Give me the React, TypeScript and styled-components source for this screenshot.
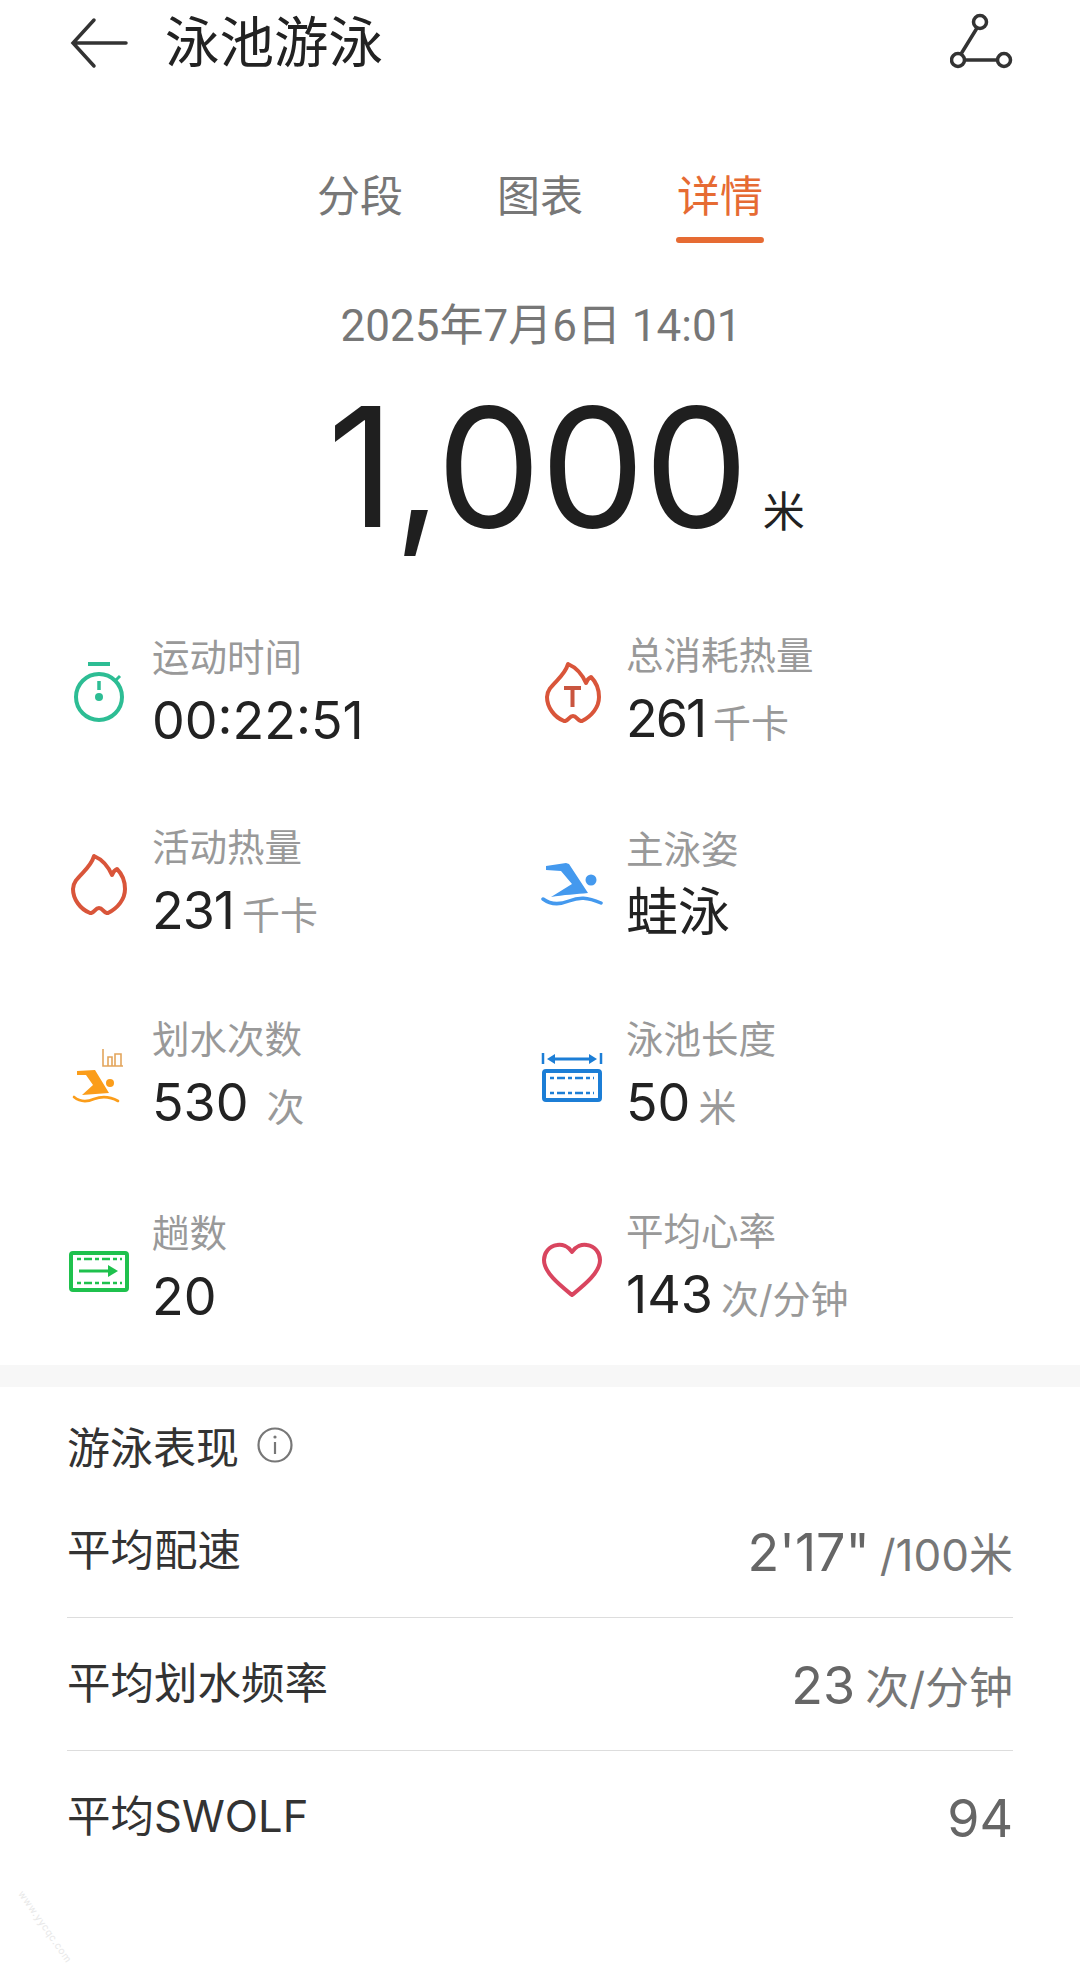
import * as React from "react";
import styled, { createGlobalStyle } from "styled-components";

const SANS = `Inter, "Noto Sans CJK SC", sans-serif`;

const GlobalStyle = createGlobalStyle`
  html, body {
    margin: 0;
    padding: 0;
    background: #ffffff;
  }
  * {
    box-sizing: border-box;
  }
`;

const Page = styled.div`
  position: relative;
  width: 1080px;
  height: 1969px;
  overflow: hidden;
  background: #ffffff;
  font-family: ${SANS};
`;

const Header = styled.div`
  display: flex;
  align-items: center;
  height: 84px;
  padding: 1px 66px 0 70px;
`;

const Title = styled.div`
  flex: 1;
  margin: 0 0 2px 37px;
  font-size: 54.5px;
  line-height: 80px;
  color: #222222;
`;

const Tabs = styled.div`
  display: flex;
  justify-content: center;
  gap: 92px;
  margin-top: 82px;
`;

const Tab = styled.div<{ $active?: boolean }>`
  display: flex;
  flex-direction: column;
  align-items: center;
  font-size: 43px;
  line-height: 60px;
  color: ${(p) => (p.$active ? "#e66b33" : "#777777")};
  &::after {
    content: "";
    width: 88px;
    height: 6px;
    margin-top: 11px;
    border-radius: 3px;
    background: ${(p) => (p.$active ? "#e66b33" : "transparent")};
  }
`;

const DateLine = styled.div`
  margin-top: 53px;
  padding-left: 2px;
  text-align: center;
  font-family: Roboto, "Noto Sans CJK SC", sans-serif;
  font-size: 44px;
  line-height: 60px;
  color: #777777;
`;

const Distance = styled.div`
  display: flex;
  justify-content: center;
  align-items: baseline;
  height: 200px;
  margin-top: 13px;
  padding-left: 52px;
  line-height: 196px;
`;

const DistanceValue = styled.span`
  font-size: 166px;
  font-weight: 400;
  letter-spacing: -1px;
  color: #1f1f1f;
`;

const DistanceUnit = styled.span`
  margin-left: 15px;
  font-size: 42px;
  color: #222222;
`;

const Stats = styled.div`
  display: grid;
  grid-template-columns: 474px 1fr;
  grid-auto-rows: 192px;
  margin-top: 26px;
  padding-left: 67px;
`;

const Stat = styled.div`
  display: flex;
  align-items: center;
`;

const IconBox = styled.svg`
  flex: none;
  width: 64px;
  height: 64px;
  margin-right: 21px;
`;

const StatText = styled.div`
  padding-top: 8px;
`;

const StatLabel = styled.div`
  font-size: 37.5px;
  line-height: 48px;
  color: #999999;
`;

const StatValue = styled.div<{ $track?: number }>`
  margin-top: 4px;
  font-size: 52px;
  line-height: 70px;
  letter-spacing: ${(p) => p.$track ?? 0}px;
  color: #222222;
`;

const StatUnit = styled.span<{ $gap?: number }>`
  margin-left: ${(p) => p.$gap ?? 8}px;
  font-size: 38px;
  letter-spacing: 0;
  color: #999999;
`;

const Band = styled.div`
  height: 22px;
  margin-top: 2px;
  background: #f7f7f7;
`;

const Section = styled.div`
  padding: 28px 67px 0;
`;

const SectionTitle = styled.div`
  display: flex;
  align-items: center;
  height: 60px;
  margin-bottom: 10px;
  font-size: 43px;
  color: #333333;
`;

const InfoIcon = styled.svg`
  width: 36px;
  height: 36px;
  margin-left: 18px;
`;

const Row = styled.div<{ $last?: boolean }>`
  display: flex;
  align-items: center;
  justify-content: space-between;
  height: 133px;
  border-bottom: 1px solid ${(p) => (p.$last ? "transparent" : "#dddddd")};
`;

const RowLabel = styled.div`
  padding-bottom: 8px;
  font-size: 43.5px;
  color: #333333;
`;

const RowValue = styled.div`
  padding-top: 2px;
  font-size: 52px;
  color: #666666;
`;

const RowUnit = styled.span`
  margin-left: 10px;
  font-size: 44px;
  color: #777777;
`;

const Watermark = styled.div`
  position: absolute;
  left: 26px;
  top: 1888px;
  transform: rotate(55deg);
  transform-origin: left top;
  font-size: 10px;
  letter-spacing: 0.5px;
  color: #e8e8e8;
  white-space: nowrap;
`;

const firePath =
  "M27 5C34 8 41 15 45 24C46 21 48 19 50 18C55 23 58 30 58 38C58 48 51 57 41 62C37 63 36 57 32 57C28 57 27 63 23 62C13 58 6 48 6 38C6 26 23 20 27 5Z";

const TimerIcon = () => (
  <IconBox viewBox="0 0 64 64" fill="none" stroke="#2dbd94" strokeWidth="4">
    <path d="M21 5H43" />
    <circle cx="32" cy="38" r="23" />
    <path d="M49 21L53 17" strokeWidth="3" />
    <path d="M32 22V31" strokeWidth="3.5" />
    <circle cx="32" cy="38" r="4" fill="#2dbd94" stroke="none" />
  </IconBox>
);

const FlameIcon = ({ total }: { total?: boolean }) => (
  <IconBox viewBox="0 0 64 64" fill="none" stroke="#d9553a" strokeWidth="4" strokeLinejoin="round">
    <path d={firePath} />
    {total && <path d="M23 29H40M31.5 29V48" stroke="#c9553f" />}
  </IconBox>
);

const BlueSwimIcon = () => (
  <IconBox viewBox="0 0 64 64" fill="none">
    <path d="M5 15L25 12L28 13L47 42C36 43 22 44 10 46L31 33L20 20L5 19Z" fill="#4499ee" />
    <circle cx="50" cy="29" r="5.5" fill="#4499ee" />
    <path d="M2 48C10 54 18 54 28 50C38 46 46 46 60 52" stroke="#4499ee" strokeWidth="3.5" strokeLinecap="round" />
  </IconBox>
);

const OrangeSwimIcon = () => (
  <IconBox viewBox="0 0 64 64" fill="none">
    <path d="M36 6V23H56M41 23V14H45V23M48 23V11H54V23" stroke="#e3a55c" strokeWidth="1.6" />
    <path d="M10 28L28 27L42 50L15 52L26 42L19 32L10 32Z" fill="#fb9d1a" />
    <circle cx="43" cy="40" r="4" fill="#fb9d1a" />
    <path d="M7 54C13 59 20 59 27 56C35 53 42 53 51 58" stroke="#fb9d1a" strokeWidth="2.6" strokeLinecap="round" />
  </IconBox>
);

const LengthIcon = () => (
  <IconBox viewBox="0 0 64 64" fill="none" stroke="#1c7ed6" strokeWidth="4">
    <path d="M2 10V21M60 10V21" strokeWidth="2.5" />
    <path d="M12 16H50" strokeWidth="3" />
    <path d="M6 16L14 11V21ZM56 16L48 11V21Z" fill="#1c7ed6" stroke="none" />
    <rect x="3" y="28" width="56" height="29" rx="2" />
    <path d="M9 35H53M9 50H53" strokeWidth="2.5" strokeDasharray="4 3 8 3" />
  </IconBox>
);

const LapsIcon = () => (
  <IconBox viewBox="0 0 64 64" fill="none" stroke="#1fc14d" strokeWidth="4">
    <rect x="4" y="18" width="56" height="37" rx="2" />
    <path d="M10 24H55M10 48H55" strokeWidth="2.5" strokeDasharray="4 3 8 3" />
    <path d="M12 36H44" strokeWidth="3" />
    <path d="M51 36L41 30V42Z" fill="#1fc14d" stroke="none" />
  </IconBox>
);

const HeartIcon = () => (
  <IconBox viewBox="0 0 64 64" fill="none" stroke="#d9455f" strokeWidth="4" strokeLinejoin="round">
    <path d="M31 17C27 11 21 9 16 10C8 11 3 18 3 25C3 38 20 51 31 60C42 51 59 38 59 25C59 18 54 11 46 10C41 9 35 11 31 17Z" />
  </IconBox>
);

export default function App() {
  return (
    <Page>
      <GlobalStyle />
      <Header>
        <svg width="58" height="52" viewBox="0 0 58 52" fill="none" stroke="#333333" strokeWidth="3.5" strokeLinecap="round">
          <path d="M56 26H4M24 3L3 26L24 49" />
        </svg>
        <Title>泳池游泳</Title>
        <svg width="64" height="60" viewBox="0 0 64 60" fill="none" stroke="#333333" strokeWidth="3.5">
          <circle cx="30" cy="9" r="6.5" />
          <circle cx="8" cy="47" r="6.5" />
          <circle cx="54" cy="47" r="6.5" />
          <path d="M27 15L11 41M15 47H47" />
        </svg>
      </Header>

      <Tabs>
        <Tab>分段</Tab>
        <Tab>图表</Tab>
        <Tab $active>详情</Tab>
      </Tabs>

      <DateLine>2025年7月6日 14:01</DateLine>

      <Distance>
        <DistanceValue>1,000</DistanceValue>
        <DistanceUnit>米</DistanceUnit>
      </Distance>

      <Stats>
        <Stat>
          <TimerIcon />
          <StatText>
            <StatLabel>运动时间</StatLabel>
            <StatValue>00:22:51</StatValue>
          </StatText>
        </Stat>
        <Stat>
          <FlameIcon total />
          <StatText>
            <StatLabel>总消耗热量</StatLabel>
            <StatValue $track={-2}>
              261<StatUnit>千卡</StatUnit>
            </StatValue>
          </StatText>
        </Stat>
        <Stat>
          <FlameIcon />
          <StatText>
            <StatLabel>活动热量</StatLabel>
            <StatValue $track={-1}>
              231<StatUnit>千卡</StatUnit>
            </StatValue>
          </StatText>
        </Stat>
        <Stat>
          <BlueSwimIcon />
          <StatText>
            <StatLabel>主泳姿</StatLabel>
            <StatValue>蛙泳</StatValue>
          </StatText>
        </Stat>
        <Stat>
          <OrangeSwimIcon />
          <StatText>
            <StatLabel>划水次数</StatLabel>
            <StatValue>
              530<StatUnit $gap={18}>次</StatUnit>
            </StatValue>
          </StatText>
        </Stat>
        <Stat>
          <LengthIcon />
          <StatText>
            <StatLabel>泳池长度</StatLabel>
            <StatValue>
              50<StatUnit>米</StatUnit>
            </StatValue>
          </StatText>
        </Stat>
        <Stat>
          <LapsIcon />
          <StatText>
            <StatLabel>趟数</StatLabel>
            <StatValue>20</StatValue>
          </StatText>
        </Stat>
        <Stat>
          <HeartIcon />
          <StatText>
            <StatLabel>平均心率</StatLabel>
            <StatValue>
              143<StatUnit>次/分钟</StatUnit>
            </StatValue>
          </StatText>
        </Stat>
      </Stats>

      <Band />

      <Section>
        <SectionTitle>
          游泳表现
          <InfoIcon viewBox="0 0 36 36" fill="none" stroke="#777777" strokeWidth="2.2">
            <circle cx="18" cy="18" r="16.5" />
            <path d="M18 15V27" />
            <circle cx="18" cy="10" r="1.6" fill="#777777" stroke="none" />
          </InfoIcon>
        </SectionTitle>
        <Row>
          <RowLabel>平均配速</RowLabel>
          <RowValue>
            2'17"<RowUnit>/100米</RowUnit>
          </RowValue>
        </Row>
        <Row>
          <RowLabel>平均划水频率</RowLabel>
          <RowValue>
            23<RowUnit>次/分钟</RowUnit>
          </RowValue>
        </Row>
        <Row $last>
          <RowLabel>平均SWOLF</RowLabel>
          <RowValue>94</RowValue>
        </Row>
      </Section>

      <Watermark>www.yycqc.com</Watermark>
    </Page>
  );
}
